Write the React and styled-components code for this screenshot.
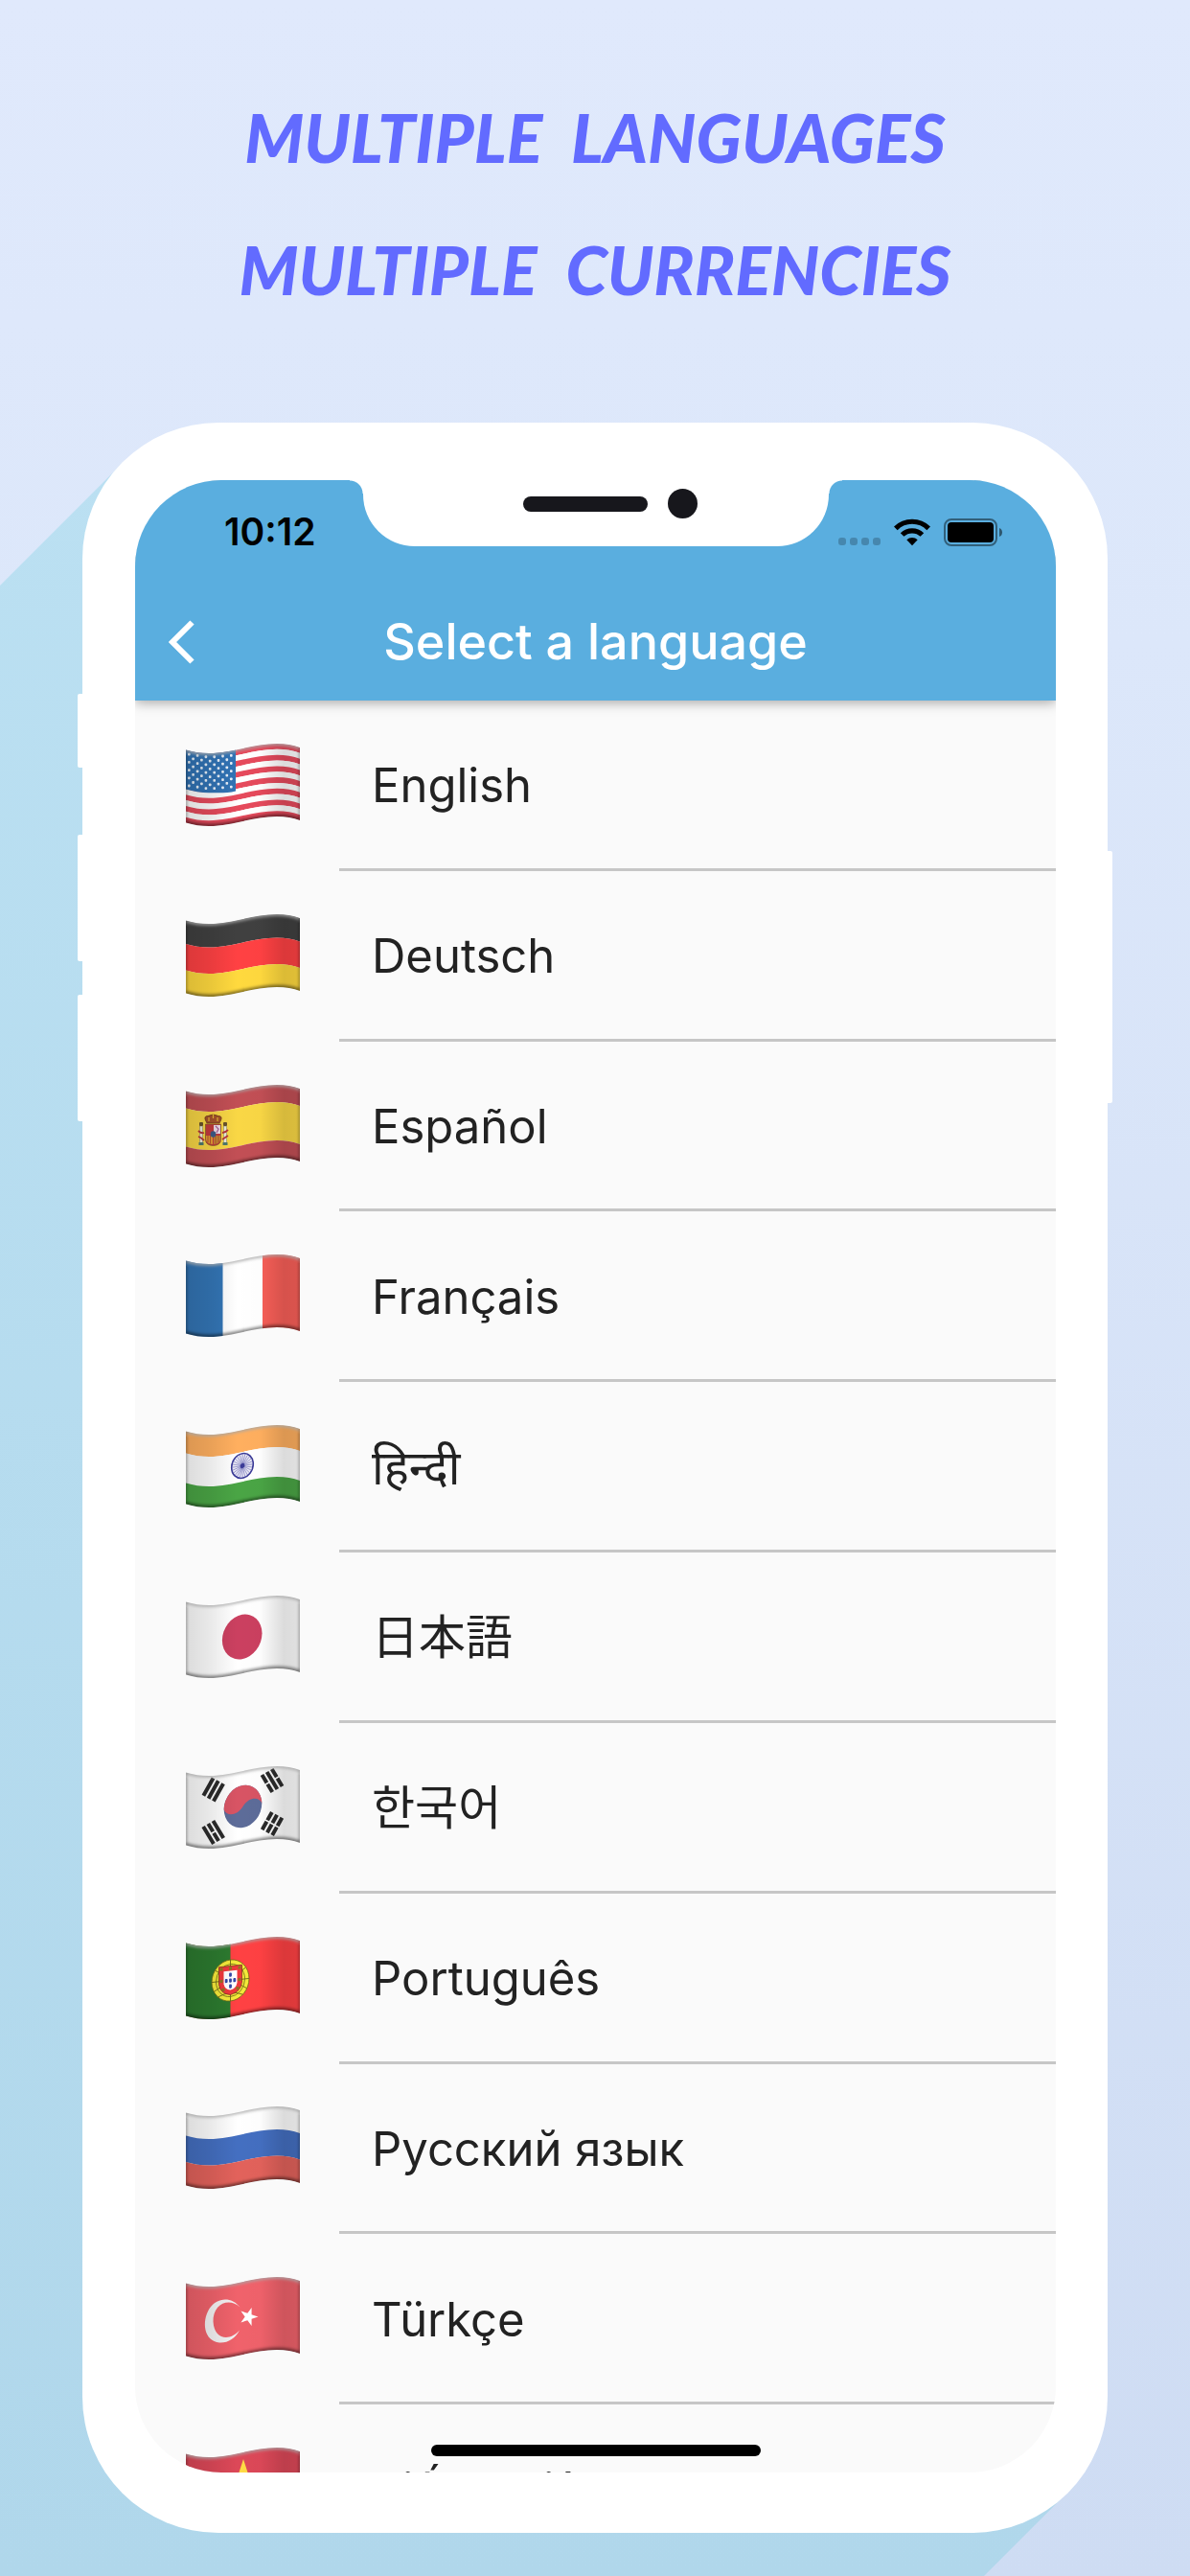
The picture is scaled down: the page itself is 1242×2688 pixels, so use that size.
import React from "react";
import styled, { createGlobalStyle } from "styled-components";

const GlobalStyle = createGlobalStyle`
  *, *::before, *::after { box-sizing: border-box; }
  body {
    margin: 0;
    background: #cfdcf3;
    font-family: Inter, "Noto Sans", "Noto Sans CJK JP", "Noto Sans CJK KR", sans-serif;
  }
`;

const Page = styled.main`
  position: relative;
  isolation: isolate;
  overflow: hidden;
  padding: 74px 86px 45px;
  background: linear-gradient(180deg, #e0e9fc 0%, #dce7fa 25%, #cedcf3 100%);
`;

const Headline = styled.h1`
  margin: 0 0 91px;
  color: #626bff;
  font-family: Lato, "Open Sans", sans-serif;
  font-size: 70px;
  font-weight: 900;
  font-style: italic;
  line-height: 138px;
  text-align: center;
  white-space: pre;
`;

const HeadlineLine = styled.span`
  display: block;
`;

const Phone = styled.section`
  position: relative;
  padding: 60px 54px 63px 55px;
  border-radius: 142px;
  background: #fff;

  &::before {
    content: "";
    position: absolute;
    z-index: -1;
    inset: 0 0 -1000px -1000px;
    background: linear-gradient(180deg, #bbe0f2 0, #b0d7eb 2247px);
    clip-path: polygon(
      1042px 42px,
      calc(100% - 42px) calc(100% - 1042px),
      calc(100% - 1042px) calc(100% - 42px),
      42px 1042px
    );
  }
`;

const SideKey = styled.span`
  position: absolute;
  ${(p) => (p.$side === "right" ? "right: -5px;" : "left: -5px;")}
  top: ${(p) => p.$top}px;
  width: 10px;
  height: ${(p) => p.$length}px;
  border-radius: 2px;
  background: #fff;
`;

const Screen = styled.div`
  position: relative;
  overflow: hidden;
  border-radius: 90px;
  background: #fafafa;
`;

const Notch = styled.div`
  position: absolute;
  z-index: 2;
  top: 0;
  left: 50%;
  display: flex;
  align-items: center;
  gap: 21px;
  width: 486px;
  height: 69px;
  margin-left: -243px;
  padding: 0 0 20px 167px;
  border-radius: 0 0 54px 54px;
  background: #fff;

  &::before,
  &::after {
    content: "";
    position: absolute;
    top: 0;
    width: 14px;
    height: 14px;
  }
  &::before {
    right: 100%;
    background: radial-gradient(circle at 0 100%, transparent 13px, #fff 14px);
  }
  &::after {
    left: 100%;
    background: radial-gradient(circle at 100% 100%, transparent 13px, #fff 14px);
  }
`;

const Speaker = styled.span`
  width: 130px;
  height: 16px;
  border-radius: 8px;
  background: #17171c;
`;

const Camera = styled.span`
  width: 31px;
  height: 31px;
  border-radius: 50%;
  background: #17171c;
`;

const TopBar = styled.header`
  position: relative;
  z-index: 1;
  background: #5aaedf;
  box-shadow: 0 2px 12px rgba(0, 0, 0, 0.35);
`;

const StatusBar = styled.div`
  display: flex;
  align-items: center;
  justify-content: space-between;
  height: 108px;
  padding: 0 55px 0 93px;
`;

const Clock = styled.time`
  color: #000;
  font-size: 39px;
  font-weight: 600;
  line-height: 48px;
`;

const StatusIcons = styled.div`
  display: flex;
  align-items: center;
  gap: 14px;
`;

const AppBar = styled.div`
  display: grid;
  grid-template-columns: 96px 1fr 96px;
  align-items: center;
  height: 122px;
`;

const BackButton = styled.button`
  display: flex;
  align-items: center;
  height: 96px;
  padding: 0 0 0 35px;
  border: 0;
  background: none;
  color: #fff;
  cursor: pointer;
`;

const Title = styled.h2`
  margin: 0;
  color: #fff;
  font-size: 52px;
  font-weight: 500;
  line-height: 64px;
  text-align: center;
`;

const ListViewport = styled.div`
  height: 1849px;
  overflow: hidden;
`;

const LanguageList = styled.ul`
  display: grid;
  grid-auto-rows: 1fr;
  height: 1956px;
  margin: 0;
  padding: 0;
  list-style: none;
`;

const LanguageButton = styled.button`
  display: flex;
  align-items: stretch;
  width: 100%;
  height: 100%;
  padding: 0;
  border: 0;
  background: none;
  color: #222;
  font: inherit;
  text-align: left;
  cursor: pointer;
`;

const FlagCell = styled.span`
  display: flex;
  flex: none;
  align-items: center;
  width: 213px;
  padding: 0 0 2px 53px;
`;

const LanguageName = styled.span`
  display: flex;
  flex: 1;
  align-items: center;
  padding: 4px 0 0 34px;
  border-bottom: 3px solid #c6c6c6;
  font-size: 49px;
  line-height: 64px;
`;

const HomeIndicator = styled.span`
  position: absolute;
  z-index: 2;
  bottom: 17px;
  left: 50%;
  width: 344px;
  height: 12px;
  margin-left: -172px;
  border-radius: 6px;
  background: #000;
`;

/* ---- Flags ---- */

const waveRight = (y) =>
  `C8 ${y + 9} 16 ${y + 10} 24 ${y + 10} C48 ${y + 10} 70 ${y} 95 ${y} C104 ${y} 112 ${y + 1.5} 119 ${y + 4}`;
const waveLeft = (y) =>
  `C112 ${y + 1.5} 104 ${y} 95 ${y} C70 ${y} 48 ${y + 10} 24 ${y + 10} C16 ${y + 10} 8 ${y + 9} 0 ${y + 6.5}`;
const band = (a, b) => `M0 ${a + 6.5} ${waveRight(a)} L119 ${b + 4} ${waveLeft(b)} Z`;
const CLOTH = band(0, 76);

const starPoints = (cx, cy, r, turn = 0, inner = 0.382) =>
  Array.from({ length: 10 }, (_, i) => {
    const rad = ((i * 36 + turn - 90) * Math.PI) / 180;
    const len = i % 2 ? r * inner : r;
    return `${(cx + len * Math.cos(rad)).toFixed(2)},${(cy + len * Math.sin(rad)).toFixed(2)}`;
  }).join(" ");

function Bands({ stops, colors }) {
  return colors.map((c, i) => <path key={i} d={band(stops[i], stops[i + 1])} fill={c} />);
}

function UnitedStates() {
  const h = 76 / 13;
  const stars = [];
  for (let row = 0; row < 9; row++) {
    const count = row % 2 ? 5 : 6;
    for (let col = 0; col < count; col++) {
      const x = (row % 2 ? 7.6 : 3.3) + col * 8.8;
      const y = 4.4 + row * 4.1;
      const lift = x < 24 ? 6.5 + (3.5 * x) / 24 : 10 - ((x - 24) / 28) * 2.3;
      stars.push(<rect key={`${row}-${col}`} x={x - 1.3} y={y + lift - 1.6} width="2.6" height="2.8" rx="0.8" fill="#e9f1fa" />);
    }
  }
  return (
    <>
      {Array.from({ length: 13 }, (_, i) => (
        <path key={i} d={band(i * h, (i + 1) * h)} fill={i % 2 ? "#fff" : "#e64a5c"} />
      ))}
      <path d="M0 0H52V49.4C43 52 33 51.2 24 51.2 C16 51 8 50 0 47.5Z" fill="#3173b5" />
      {stars}
    </>
  );
}

function SpainArms() {
  return (
    <g>
      <path d="M20.5 37 Q18.5 32.5 23 32.5 Q28.5 29.5 34 32.5 Q38.5 32.5 36.5 37 L35 40 H22Z" fill="#a5522c" stroke="#6d3a1c" strokeWidth="0.8" />
      <path d="M28.5 30V35M24 34v4M33 34v4" stroke="#e5b735" strokeWidth="1.2" />
      <path d="M20.5 41H36.5V57Q36.5 63 28.5 63.5Q20.5 63 20.5 57Z" fill="#c23a3d" stroke="#8b5b2b" strokeWidth="0.8" />
      <rect x="29" y="42" width="7" height="9" fill="#eedbe6" />
      <path d="M31 43l3 3l-2 4" stroke="#a45e9a" strokeWidth="1.2" fill="none" />
      <path d="M21 53H28V62Q21.5 61.5 21 57Z" fill="#e39a35" />
      <path d="M29 53H36V57Q35.5 61.5 29 62Z" fill="#c98a34" />
      <path d="M23 53v7M25.5 53v8.5M31 53v8.5M34 53v7" stroke="#a9462b" strokeWidth="0.8" />
      <ellipse cx="28.5" cy="51.5" rx="2.8" ry="3.3" fill="#3d5a86" />
      {[16, 41].map((x) => (
        <g key={x}>
          <rect x={x - 1.5} y="43" width="3" height="18" fill="#eceadb" stroke="#7c7c66" strokeWidth="0.5" />
          <rect x={x - 2.5} y="60" width="5" height="3" fill="#4f7a6e" />
          <rect x={x - 2} y="39" width="4" height="4" rx="1" fill="#69532c" />
        </g>
      ))}
      <path d="M13 48q3 3 6 2M13 54q3 1 6 4M38 50q3 0 6 -3M38 57q3 -2 6 -4" stroke="#b7363a" strokeWidth="1.8" fill="none" />
    </g>
  );
}

function Chakra() {
  return (
    <g transform="translate(59 42.5) skewY(-9)">
      <ellipse rx="11.3" ry="12.8" fill="#ecebf6" stroke="#3a3a97" strokeWidth="1.6" />
      {Array.from({ length: 24 }, (_, i) => {
        const a = (i * Math.PI) / 12;
        return <line key={i} x1="0" y1="0" x2={10.6 * Math.cos(a)} y2={12 * Math.sin(a)} stroke="#5050a8" strokeWidth="0.5" />;
      })}
      <ellipse rx="2.3" ry="2.6" fill="#3a3a97" />
    </g>
  );
}

function Trigram({ x, y, angle, bars }) {
  return (
    <g transform={`translate(${x} ${y}) rotate(${angle})`} fill="#2b2b2b">
      {bars.map((solid, i) => {
        const top = (i - 1) * 6 - 2;
        return solid ? (
          <rect key={i} x="-10.5" y={top} width="21" height="4" />
        ) : (
          <React.Fragment key={i}>
            <rect x="-10.5" y={top} width="9.7" height="4" />
            <rect x="0.8" y={top} width="9.7" height="4" />
          </React.Fragment>
        );
      })}
    </g>
  );
}

function Korea() {
  return (
    <>
      <path d={CLOTH} fill="#fff" />
      <g transform="translate(59.5 42) skewY(-9)">
        <ellipse rx="19.8" ry="22" fill="#5d6c99" />
        <path d="M-19.8 0A19.8 22 0 0 1 19.8 0C17 -8 6 -9 0 0C-6 9 -17 8 -19.8 0Z" fill="#d85464" />
      </g>
      <Trigram x={28.7} y={24.5} angle={-61} bars={[1, 1, 1]} />
      <Trigram x={90} y={15} angle={59} bars={[0, 1, 0]} />
      <Trigram x={28.7} y={69} angle={59} bars={[1, 0, 1]} />
      <Trigram x={90} y={60} angle={-61} bars={[0, 0, 0]} />
    </>
  );
}

function Portugal() {
  return (
    <>
      <path d={CLOTH} fill="#ff4143" />
      <path d="M0 0H46.5V90H0Z" fill="#2c7a2f" />
      <g transform="translate(46.5 45.5) skewY(-6)">
        <ellipse rx="19.5" ry="21.5" fill="#f4e93a" stroke="#6e6a17" strokeWidth="0.8" />
        <ellipse rx="15" ry="17" fill="none" stroke="#6e6a17" strokeWidth="0.8" />
        <path d="M-19.5 0H19.5M0 -21.5V21.5M-16 -12Q0 -2 17 10M-17 10Q0 0 16 -12M-13 16Q0 10 13 16" stroke="#6e6a17" strokeWidth="0.9" fill="none" />
        <path d="M-12 -15H12V3Q11 13 0 15Q-11 13 -12 3Z" fill="#f0383c" stroke="#7c2a20" strokeWidth="0.7" />
        <path d="M-7 -10H7V3Q6 9 0 10Q-6 9 -7 3Z" fill="#fff" />
        {[[0, -6], [0, 0], [0, 6], [-4.3, 0], [4.3, 0]].map(([x, y]) => (
          <rect key={`${x}/${y}`} x={x - 1.4} y={y - 2} width="2.8" height="4.2" rx="1" fill="#3447a8" />
        ))}
        {[[-9.5, -12.5], [0, -12.5], [9.5, -12.5], [-9.5, 0], [9.5, 0], [-7.5, 9], [7.5, 9]].map(([x, y]) => (
          <rect key={`c${x}/${y}`} x={x - 1.5} y={y - 1.5} width="3" height="3" fill="#8d7420" />
        ))}
      </g>
    </>
  );
}

const FLAGS = {
  us: <UnitedStates />,
  de: <Bands stops={[0, 24.5, 52, 76]} colors={["#404040", "#ff4143", "#ffd93e"]} />,
  es: (
    <>
      <Bands stops={[0, 18, 58, 76]} colors={["#c24f55", "#f9d745", "#c24f55"]} />
      <SpainArms />
    </>
  ),
  fr: (
    <>
      <path d={CLOTH} fill="#fff" />
      <path d="M0 0H38.5V90H0Z" fill="#3375b5" />
      <path d="M80 0H119V90H80Z" fill="#f95f58" />
    </>
  ),
  in: (
    <>
      <Bands stops={[0, 23, 54, 76]} colors={["#ffaf5f", "#fff", "#4aa545"]} />
      <Chakra />
    </>
  ),
  jp: (
    <>
      <path d={CLOTH} fill="#fff" />
      <ellipse rx="20.8" ry="23.2" fill="#cb4060" transform="translate(58.7 43) skewY(-10)" />
    </>
  ),
  kr: <Korea />,
  pt: <Portugal />,
  ru: <Bands stops={[0, 24, 51.5, 76]} colors={["#fff", "#446fc1", "#e2625b"]} />,
  tr: (
    <>
      <path d={CLOTH} fill="#f0626b" />
      <path d="M56.5 31.5C47 19.5 32 21.5 24.5 33C16 47 19 67 35 68.5C44 69 51.5 64 56 55.5C46 67.5 29.5 65.5 28.5 46.5C28 28 45 20.5 56.5 31.5Z" fill="#f3f1f2" />
      <polygon points={starPoints(65.5, 41.5, 10, 18)} fill="#fff" />
    </>
  ),
  vn: (
    <>
      <path d={CLOTH} fill="#dc4858" />
      <polygon points={starPoints(60, 41, 29, 0)} fill="#ffda44" />
    </>
  ),
};

function Flag({ code }) {
  const clip = `cloth-${code}`;
  const shade = `shade-${code}`;
  const soft = `soft-${code}`;
  return (
    <svg width="119" height="86" viewBox="0 0 119 86" aria-hidden="true">
      <defs>
        <clipPath id={clip}>
          <path d={CLOTH} />
        </clipPath>
        <linearGradient id={shade}>
          <stop offset="0" stopOpacity="0.14" />
          <stop offset="0.2" stopOpacity="0.09" />
          <stop offset="0.45" stopOpacity="0" />
          <stop offset="0.65" stopOpacity="0.01" />
          <stop offset="0.86" stopOpacity="0.14" />
          <stop offset="1" stopOpacity="0.12" />
        </linearGradient>
        <filter id={soft} x="-10%" y="-30%" width="120%" height="160%">
          <feGaussianBlur stdDeviation="1.5" />
        </filter>
      </defs>
      <g clipPath={`url(#${clip})`}>
        {FLAGS[code]}
        <path d={CLOTH} fill={`url(#${shade})`} />
        <g filter={`url(#${soft})`} fill="none">
          <path d={`M0 6.5 ${waveRight(0)}`} stroke="#a8a8a8" strokeOpacity="0.8" strokeWidth="4" />
          <path d="M0 5V83M119 3V82" stroke="#000" strokeOpacity="0.4" strokeWidth="2" />
          <path d={`M0 82.5 ${waveRight(76)}`} stroke="#000" strokeOpacity="0.45" strokeWidth="5" />
        </g>
      </g>
    </svg>
  );
}

/* ---- Status and navigation icons ---- */

const SignalIcon = () => (
  <svg width="44" height="29" viewBox="0 0 44 29" aria-hidden="true">
    {[0, 12, 24, 36].map((x) => (
      <rect key={x} x={x} y="20" width="8" height="8" rx="3" fill="#000" fillOpacity="0.22" />
    ))}
  </svg>
);

const WifiIcon = () => (
  <svg width="38" height="29" viewBox="0 0 38 29" aria-hidden="true">
    <g fill="none" stroke="#000" strokeWidth="5.2">
      <path d="M1.8 10.3A24.5 24.5 0 0 1 36.2 10.3" />
      <path d="M8.6 17A15 15 0 0 1 29.4 17" />
    </g>
    <path d="M13.3 22.2A8.2 8.2 0 0 1 24.7 22.2L19 28.3Z" />
  </svg>
);

const BatteryIcon = () => (
  <svg width="62" height="29" viewBox="0 0 62 29" aria-hidden="true">
    <rect x="1" y="1" width="54" height="27" rx="7" fill="none" stroke="#000" strokeOpacity="0.45" strokeWidth="2" />
    <rect x="4" y="4" width="48" height="21" rx="4" />
    <path d="M58 10Q61 11 61 14.5Q61 18 58 19Z" fillOpacity="0.5" />
  </svg>
);

const ChevronIcon = () => (
  <svg width="27" height="46" viewBox="0 0 27 46" aria-hidden="true">
    <path d="M24.5 2.5L4 23L24.5 43.5" fill="none" stroke="currentColor" strokeWidth="6" />
  </svg>
);

const LANGUAGES = [
  { code: "us", lang: "en", name: "English" },
  { code: "de", lang: "de", name: "Deutsch" },
  { code: "es", lang: "es", name: "Español" },
  { code: "fr", lang: "fr", name: "Français" },
  { code: "in", lang: "hi", name: "हिन्दी" },
  { code: "jp", lang: "ja", name: "日本語" },
  { code: "kr", lang: "ko", name: "한국어" },
  { code: "pt", lang: "pt", name: "Português" },
  { code: "ru", lang: "ru", name: "Русский язык" },
  { code: "tr", lang: "tr", name: "Türkçe" },
  { code: "vn", lang: "vi", name: "Tiếng Việt" },
];

export default function App() {
  return (
    <>
      <GlobalStyle />
      <Page>
        <Headline>
          <HeadlineLine>{"MULTIPLE  LANGUAGES"}</HeadlineLine>
          <HeadlineLine>{"MULTIPLE  CURRENCIES"}</HeadlineLine>
        </Headline>
        <Phone>
          <SideKey $side="left" $top={283} $length={77} />
          <SideKey $side="left" $top={430} $length={132} />
          <SideKey $side="left" $top={597} $length={132} />
          <SideKey $side="right" $top={447} $length={263} />
          <Screen>
            <Notch>
              <Speaker />
              <Camera />
            </Notch>
            <TopBar>
              <StatusBar>
                <Clock>10:12</Clock>
                <StatusIcons>
                  <SignalIcon />
                  <WifiIcon />
                  <BatteryIcon />
                </StatusIcons>
              </StatusBar>
              <AppBar>
                <BackButton type="button" aria-label="Back">
                  <ChevronIcon />
                </BackButton>
                <Title>Select a language</Title>
              </AppBar>
            </TopBar>
            <ListViewport>
              <LanguageList>
                {LANGUAGES.map(({ code, lang, name }) => (
                  <li key={code}>
                    <LanguageButton type="button">
                      <FlagCell>
                        <Flag code={code} />
                      </FlagCell>
                      <LanguageName lang={lang}>{name}</LanguageName>
                    </LanguageButton>
                  </li>
                ))}
              </LanguageList>
            </ListViewport>
            <HomeIndicator />
          </Screen>
        </Phone>
      </Page>
    </>
  );
}
